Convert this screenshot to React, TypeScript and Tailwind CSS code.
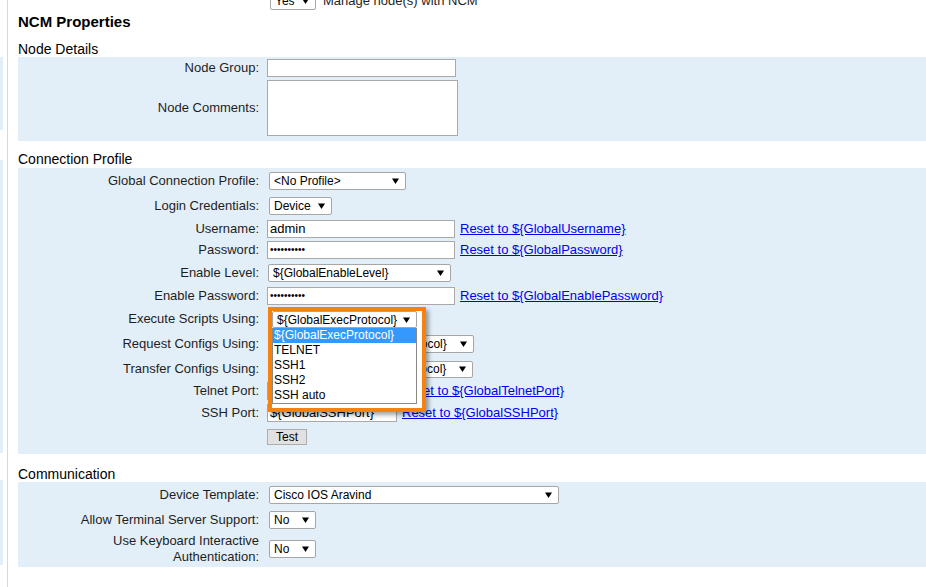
import React from 'react';

const Arrow: React.FC = () => (
  <svg width="7" height="6" viewBox="0 0 7 6" className="shrink-0">
    <path d="M0 0.5H7L3.5 6Z" fill="#000" />
  </svg>
);

interface SelProps {
  text: string;
  className: string;
}

const Sel: React.FC<SelProps> = ({ text, className }) => (
  <div className={`flex items-center justify-between border border-[#a6a6a6] rounded-[2px] bg-white pl-[4px] pr-[6px] text-[12px] text-black overflow-hidden whitespace-nowrap ${className}`}>
    <span>{text}</span>
    <Arrow />
  </div>
);

const Input: React.FC<{ className: string; value?: string; password?: boolean }> = ({ className, value, password }) => (
  <div className={`flex items-center border border-[#a9a9a9] bg-white pl-[2px] text-black overflow-hidden whitespace-nowrap ${className}`}>
    {password ? <span className="text-[10px] leading-none">••••••••••</span> : <span className="text-[13px]">{value}</span>}
  </div>
);

const Link: React.FC<{ text: string }> = ({ text }) => (
  <a href="#" className="ml-[5px] text-[13px] text-[#0000ee] underline whitespace-nowrap">{text}</a>
);

interface RowProps {
  label: React.ReactNode;
  h: string;
  children?: React.ReactNode;
}

const Row: React.FC<RowProps> = ({ label, h, children }) => (
  <div className={`flex items-center ${h}`}>
    <div className="w-[241px] shrink-0 text-right text-[13px] leading-[16px] text-[#1e1e1e]">{label}</div>
    <div className="ml-[8px] flex items-center h-full relative">{children}</div>
  </div>
);

const options = ['${GlobalExecProtocol}', 'TELNET', 'SSH1', 'SSH2', 'SSH auto'];

export default function App() {
  return (
    <div className="flex w-[926px] h-[587px] overflow-hidden bg-white font-['Liberation_Sans',Arial,sans-serif] text-black">
      {/* cut-off left panel */}
      <div className="w-[3px] shrink-0 flex flex-col">
        <div className="h-[57px]" />
        <div className="h-[73px] bg-[#e3eff8]" />
        <div className="h-[30px]" />
        <div className="h-[293px] bg-[#e3eff8]" />
        <div className="h-[27px]" />
        <div className="h-[85px] bg-[#e3eff8]" />
      </div>
      <div className="w-[4px] shrink-0" />
      <div className="w-px shrink-0 bg-[#d9d9d9]" />

      <main className="flex-1 pl-[10px] flex flex-col">
        <div className="-mt-[8px] h-[18px] flex items-center pl-[252px] shrink-0">
          <Sel text="Yes" className="w-[46px] h-[18px]" />
          <span className="ml-[7px] text-[13px] text-[#1e1e1e]">Manage node(s) with NCM</span>
        </div>

        <div className="h-[24px] flex items-center text-[15px] font-bold shrink-0">NCM Properties</div>

        <div className="mt-[7px] h-[16px] flex items-center text-[14px] shrink-0">Node Details</div>
        <div className="bg-[#e3eff8] pt-[2px] pb-[5px] flex flex-col gap-[3px] shrink-0">
          <Row label="Node Group:" h="h-[18px]">
            <Input className="w-[189px] h-[18px]" />
          </Row>
          <Row label="Node Comments:" h="h-[56px]">
            <div className="w-[191px] h-[56px] border border-[#a9a9a9] bg-white" />
          </Row>
        </div>

        <div className="mt-[10px] h-[17px] flex items-center text-[14px] shrink-0">Connection Profile</div>
        <div className="bg-[#e3eff8] pb-[6px] flex flex-col shrink-0">
          <Row label="Global Connection Profile:" h="h-[26px]">
            <Sel text="<No Profile>" className="ml-[2px] w-[137px] h-[18px]" />
          </Row>
          <Row label="Login Credentials:" h="h-[24px]">
            <Sel text="Device" className="ml-[2px] w-[63px] h-[18px]" />
          </Row>
          <Row label="Username:" h="h-[22px]">
            <Input className="w-[188px] h-[18px]" value="admin" />
            <Link text="Reset to ${GlobalUsername}" />
          </Row>
          <Row label="Password:" h="h-[20px]">
            <Input className="w-[188px] h-[18px]" password />
            <Link text="Reset to ${GlobalPassword}" />
          </Row>
          <Row label="Enable Level:" h="h-[26px]">
            <Sel text="${GlobalEnableLevel}" className="ml-[1px] w-[183px] h-[18px]" />
          </Row>
          <Row label="Enable Password:" h="h-[20px]">
            <Input className="w-[188px] h-[18px]" password />
            <Link text="Reset to ${GlobalEnablePassword}" />
          </Row>
          <Row label="Execute Scripts Using:" h="h-[26px]">
            <div className="w-[150px]" />
            {/* open dropdown, highlighted with an orange frame */}
            <div className="absolute left-[1px] top-[1px] z-10 w-[158px] h-[105px] border-4 border-[#f5820f] bg-white shadow-[3px_3px_4px_rgba(0,0,0,0.35)]">
              <Sel text="${GlobalExecProtocol}" className="w-[145px] h-[17px]" />
              <div className="w-[145px] border border-t-0 border-[#8a8a8a] bg-white text-[12px]">
                {options.map((o, i) => (
                  <div
                    key={o}
                    className={`h-[15px] leading-[15px] pl-[1px] ${i === 0 ? 'bg-[#3399ff] text-white' : 'text-black'}`}
                  >
                    {o}
                  </div>
                ))}
              </div>
            </div>
          </Row>
          <Row label="Request Configs Using:" h="h-[24px]">
            <Sel text="${GlobalConfigRequestProtocol}" className="ml-[2px] w-[205px] h-[18px]" />
          </Row>
          <Row label="Transfer Configs Using:" h="h-[26px]">
            <Sel text="${GlobalConfigTransferProtocol}" className="ml-[2px] w-[204px] h-[17px]" />
          </Row>
          <Row label="Telnet Port:" h="h-[18px]">
            <Input className="w-[128px] h-[18px]" value="${GlobalTelnetPort}" />
            <Link text="Reset to ${GlobalTelnetPort}" />
          </Row>
          <Row label="SSH Port:" h="h-[26px]">
            <Input className="w-[130px] h-[18px]" value="${GlobalSSHPort}" />
            <Link text="Reset to ${GlobalSSHPort}" />
          </Row>
          <Row label="" h="h-[22px]">
            <button className="w-[40px] h-[16px] border border-[#adadad] bg-[#e1e1e1] text-[12px] leading-[14px] text-black">Test</button>
          </Row>
        </div>

        <div className="mt-[12px] h-[16px] flex items-center text-[14px] shrink-0">Communication</div>
        <div className="bg-[#e3eff8] pb-[1px] flex flex-col shrink-0">
          <Row label="Device Template:" h="h-[26px]">
            <Sel text="Cisco IOS Aravind" className="ml-[2px] w-[290px] h-[18px]" />
          </Row>
          <Row label="Allow Terminal Server Support:" h="h-[24px]">
            <Sel text="No" className="ml-[2px] w-[47px] h-[18px]" />
          </Row>
          <Row label={<>Use Keyboard Interactive<br />Authentication:</>} h="h-[34px]">
            <Sel text="No" className="ml-[2px] w-[47px] h-[18px]" />
          </Row>
        </div>
      </main>
    </div>
  );
}
